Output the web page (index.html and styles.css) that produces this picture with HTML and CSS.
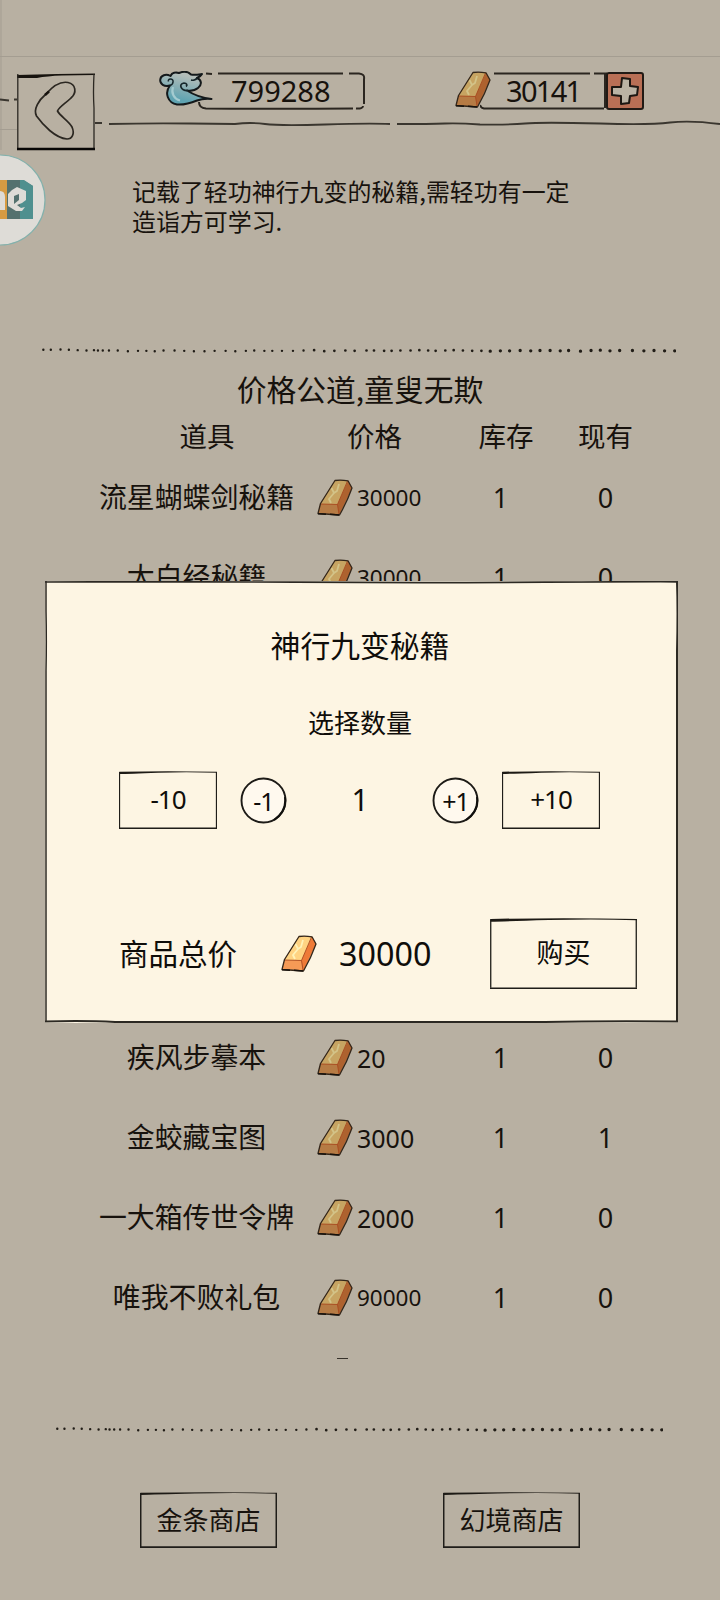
FILE: index.html
```html
<!DOCTYPE html>
<html lang="zh-CN">
<head>
<meta charset="utf-8">
<title>金条商店</title>
<link rel="stylesheet" href="styles.css">
</head>
<body>
<svg class="defs" width="0" height="0" aria-hidden="true">
  <symbol id="ingot" viewBox="0 0 36 37">
    <path d="M18 1 31 1.500 35 9 22.500 36 1 34.500 3.500 24.500Z" fill="var(--ingot-mid)"/>
    <path d="M18 1.500 31 2 20.500 25.500 3.500 25Z" fill="var(--ingot-top)"/>
    <path d="M14.500 9 17 14 12 20 14 24M22 5 20 12 17 14" stroke="var(--ingot-shine)" stroke-width="1.800" fill="none"/>
    <path d="M31 2 35 9 22 36 20.500 25.500Z" fill="var(--ingot-side)"/>
    <path d="M3.500 25 20.500 25.500 30.500 2M20.500 25.500 22 35" fill="none" stroke="#a8481f" stroke-width=".9"/>
    <path d="M18 1.500Q24 .8 31 1.800L35 9Q30 23 22.500 36L1 34.500 3.500 24.500Z" fill="none" stroke="#33261a" stroke-width="1.300" stroke-linejoin="round"/>
    <path d="M1 34.700 9 35.200M13 35.300 22 36" stroke="#17120d" stroke-width="1.500"/>
  </symbol>
  <symbol id="frame" viewBox="0 0 100 60" preserveAspectRatio="none">
    <path d="M.3 .8Q50 -.4 100 .8V1.800Q70 .6 40 1.700T.3 3.200Z"/>
    <path d="M.5 1V59" class="thin"/>
    <path d="M99.500 1V59" class="thin"/>
    <path d="M0 59.500H100" class="mid"/>
  </symbol>
  <symbol id="dots" viewBox="0 0 1440 20" preserveAspectRatio="none">
    <path stroke-width="2.400" class="dot" d="M3 8h.1M20 8h.1M42 7h.1M61 8h.1M81 9h.1M101 10h.1M118 9h.1M127 10h.1M138 10h.1M152 10h.1M172 10h.1M195 12h.1M218 11h.1M237 11h.1M256 12h.1M276 10h.1M301 10h.1M323 11h.1M345 12h.1M369 12h.1M392 11h.1M417 11h.1M439 12h.1M463 11h.1M482 10h.1M505 11h.1M523 11h.1M545 11h.1M570 11h.1M594 10h.1"/>
    <path stroke-width="2.700" class="dot" d="M618 9h.1M641 12h.1M664 11h.1M689 10h.1M710 11h.1M737 10h.1M754 10h.1M777 11h.1M794 11h.1M814 10h.1M837 10h.1M857 9h.1M877 10h.1M894 11h.1M916 10h.1M935 9h.1M956 10h.1M977 11h.1M998 11h.1"/>
    <path stroke-width="3.300" class="dot" d="M1018 12h.1M1041 11h.1M1062 11h.1M1086 10h.1M1110 11h.1M1131 10h.1M1154 10h.1M1177 11h.1M1196 10h.1M1223 12h.1M1247 10h.1M1268 9h.1M1290 11h.1M1312 10h.1M1341 10h.1M1367 11h.1M1390 10h.1M1414 11h.1M1437 11h.1"/>
  </symbol>
</svg>

<main class="screen">
  <header class="topbar">
    <svg class="rules" viewBox="0 0 720 150" fill="none">
      <path class="seam" d="M0 56.500H720M0 129.500H17M1 0V150"/>
      <path class="ink" d="M0 99.500 9 100.500M14 99.500H18M94 123H102"/>
      <path class="ink" d="M109 124Q150 123 190 123.500T235 124Q250 122 265 124T325 124.500 390 124"/>
      <path class="ink" d="M397 124Q430 124 445 123.500T480 124.500Q510 125 525 123.500T600 123.500Q650 125 670 122.500T720 124"/>
    </svg>
    <div class="back">
      <svg viewBox="0 0 78 78">
        <path d="M0 2Q20 1.500 40 1T78 .5V2Q60 2 45 2.500T20 5L0 5Z" fill="#17130e"/>
        <path d="M.8 1V77M77 1Q76 20 77 35V77" fill="none" stroke="#2c2822" stroke-width="1.300"/>
        <path d="M0 76H78" stroke="#080706" stroke-width="2.600"/>
        <path d="M29 21C35 14 43 8 51 9.500C59 11 60 20 54 25C49 30 42 34 40.500 38C43 43 52 48 55 54C58 61 55 66 50 66C38 65 26 52 19.500 43C16 36 22 27 29 21Z" fill="none" stroke="#2b2721" stroke-width="1.700"/>
        <path d="M28 22 32 18.500" stroke="#17130e" stroke-width="2.400"/>
      </svg>
    </div>
    <div class="purse purse-cloud">
      <svg class="purse-frame" viewBox="0 0 168 38" fill="none">
        <path class="pen" d="M8 1.500 14 2M20 1.500H145M151 1.500H161Q167 2 166 7V32M165 34Q165 37 158 36.500M155 36.500Q80 37 8 36.500Q1 36 1 30"/>
      </svg>
      <svg class="cloud" viewBox="0 0 54 36">
        <defs><linearGradient id="sky" x1=".7" y1="0" x2=".35" y2="1"><stop offset=".15" stop-color="#b4bdb9"/><stop offset=".85" stop-color="#5fa3b1"/></linearGradient></defs>
        <path d="M11 14.500C5 16 1 13 1.200 9C1.500 4 7 2.500 11.500 5C13 1.500 17 1 20 2C24 .3 29 .5 32 3.500C36 4 39 3.500 43 3C42 5 40 6 38 7C43 9 43 14 39 17C36 19.500 32 20 28 19.500C35 24 43 27 52.500 28C46 27.500 42 28 38 29.500C32 32 25 34 18 33.500C9 32 5 22 11 14.500Z" fill="url(#sky)" stroke="#14191b" stroke-width="2" stroke-linejoin="round"/>
        <path d="M11 14.500C15 13 15 8 11.500 8C9.500 8 9 9.500 9.500 10.500" fill="none" stroke="#16262b" stroke-width="1.500"/>
        <path d="M29 19.500C22 20 19 13 25 12C28 12 28.500 14.500 27 15.500M38 7C37 9 34 9.500 32 9" fill="none" stroke="#16262b" stroke-width="1.700"/>
        <path d="M14 16C12 22 15 28 21 29.500" fill="none" stroke="#a4cbd0" stroke-width="2.200"/>
      </svg>
      <span class="amount">799288</span>
    </div>
    <div class="purse purse-gold">
      <svg class="purse-frame" viewBox="0 0 128 38" fill="none">
        <path class="pen" d="M14 1.500H110M114 1.500H127M125 2V36M124 36.500H4Q1 36 0 33"/>
      </svg>
      <svg class="ingot dim"><use href="#ingot"/></svg>
      <span class="amount">30141</span>
      <svg class="plus" viewBox="0 0 38 38">
        <rect x="1" y="1" width="36" height="36" rx="2" fill="#b96f55" stroke="#211a15" stroke-width="2"/>
        <path d="M16 6 24 7V14L32 15 31 23 24 24 23 31 15 32V24L6 23V15L15 15Z" fill="#bbb3a4" stroke="#1d1712" stroke-width="2" stroke-linejoin="round"/>
      </svg>
    </div>
  </header>

  <svg class="floater" viewBox="0 0 46 92">
    <circle cx="0" cy="46" r="45" fill="#dedcd7" stroke="#83b1ac" stroke-width="1.200"/>
    <path d="M0 26H7V65H0Z" fill="#d69b43"/>
    <path d="M7 26H23L33 32V65H7Z" fill="#54716e"/>
    <path d="M20 26H24L33 32V65H20Z" fill="#4f908f"/>
    <path d="M0 37Q5 37 5 43V56H0" fill="#dedcd7"/>
    <path d="M12 36 17 33 26 37V46L22 49 17 51 21 54 25 53 22 57 16 57 8 52V40Z" fill="#dedcd7"/>
    <path d="M14 42 19 40V46L14 50Z" fill="#54716e"/>
  </svg>

  <p class="desc">记载了轻功神行九变的秘籍,需轻功有一定<br>造诣方可学习.</p>

  <svg class="dotline dotline-top"><use href="#dots"/></svg>

  <h1 class="slogan">价格公道,童叟无欺</h1>

  <div class="row head"><span class="name">道具</span><span class="price">价格</span><span class="stock">库存</span><span class="own">现有</span></div>

  <section class="list">
    <div class="row"><span class="name">流星蝴蝶剑秘籍</span><span class="price"><svg class="ingot dim"><use href="#ingot"/></svg><b class="small">30000</b></span><span class="stock num">1</span><span class="own num">0</span></div>
    <div class="row"><span class="name">太白经秘籍</span><span class="price"><svg class="ingot dim"><use href="#ingot"/></svg><b class="small">30000</b></span><span class="stock num">1</span><span class="own num">0</span></div>
    <div class="row after-dialog"><span class="name">疾风步摹本</span><span class="price"><svg class="ingot dim"><use href="#ingot"/></svg><b>20</b></span><span class="stock num">1</span><span class="own num">0</span></div>
    <div class="row"><span class="name">金蛟藏宝图</span><span class="price"><svg class="ingot dim"><use href="#ingot"/></svg><b>3000</b></span><span class="stock num">1</span><span class="own num">1</span></div>
    <div class="row"><span class="name">一大箱传世令牌</span><span class="price"><svg class="ingot dim"><use href="#ingot"/></svg><b>2000</b></span><span class="stock num">1</span><span class="own num">0</span></div>
    <div class="row"><span class="name">唯我不败礼包</span><span class="price"><svg class="ingot dim"><use href="#ingot"/></svg><b class="small">90000</b></span><span class="stock num">1</span><span class="own num">0</span></div>
  </section>
  <div class="peek"></div>

  <svg class="dotline dotline-bottom"><use href="#dots"/></svg>

  <nav class="shops">
    <div class="btn shop"><svg class="frame heavy"><use href="#frame"/></svg><span>金条商店</span></div>
    <div class="btn shop"><svg class="frame heavy"><use href="#frame"/></svg><span>幻境商店</span></div>
  </nav>

  <section class="dialog">
    <svg class="dialog-edge" viewBox="0 0 633 442" preserveAspectRatio="none" fill="none">
      <path d="M0 1Q120 .5 250 1.200T500 1.200 633 .8" stroke-width="1.700"/>
      <path d="M1 0V30Q1.600 60 1 90V441" stroke-width="1.500"/>
      <path d="M632 1Q633 30 632 70V441" stroke-width="2"/>
      <path d="M0 440.500Q40 439.500 70 441H500Q550 440 633 440.500" stroke-width="2"/>
    </svg>
    <h2>神行九变秘籍</h2>
    <p class="pick">选择数量</p>
    <div class="stepper">
      <div class="btn step"><svg class="frame"><use href="#frame"/></svg><span>-10</span></div>
      <div class="round"><svg viewBox="0 0 47 47"><circle cx="23.500" cy="23.500" r="22" fill="#fff9ee" stroke="#1d1b17" stroke-width="1.900"/><path d="M45 20Q47 34 34 43" fill="none" stroke="#11100d" stroke-width="2"/></svg><span>-1</span></div>
      <span class="count">1</span>
      <div class="round"><svg viewBox="0 0 47 47"><circle cx="23.500" cy="23.500" r="22" fill="#fff9ee" stroke="#1d1b17" stroke-width="1.900"/><path d="M45 20Q47 34 34 43" fill="none" stroke="#11100d" stroke-width="2"/></svg><span>+1</span></div>
      <div class="btn step"><svg class="frame"><use href="#frame"/></svg><span>+10</span></div>
    </div>
    <div class="total">
      <span class="label">商品总价</span>
      <svg class="ingot"><use href="#ingot"/></svg>
      <span class="sum">30000</span>
      <div class="btn buy"><svg class="frame"><use href="#frame"/></svg><span>购买</span></div>
    </div>
  </section>
</main>
</body>
</html>
```

FILE: styles.css
```css
:root {
  --paper: #b8b0a2;
  --text: #17120d;
  --cjk: "Noto Sans CJK SC", sans-serif;
  --digits: "Noto Sans", "Noto Sans CJK SC", sans-serif;
  --ingot-top: #ffd382;
  --ingot-mid: #f59a56;
  --ingot-side: #ee7a38;
  --ingot-shine: #fff2b8;
}

* { box-sizing: border-box; }

body { margin: 0; background: var(--paper); }

h1, h2, p { margin: 0; font-weight: 400; }

b { font-weight: 400; }

svg { display: block; }

.defs { position: absolute; }

.screen {
  position: relative;
  display: flex;
  flex-direction: column;
  width: 720px;
  height: 1600px;
  overflow: hidden;
  background: var(--paper);
  color: var(--text);
  font-family: var(--cjk);
}

/* top bar */
.topbar {
  position: relative;
  display: flex;
  align-items: flex-start;
  flex: none;
  height: 150px;
  padding: 72px 0 0 17px;
}

.rules { position: absolute; inset: 0; width: 720px; height: 150px; }
.seam { stroke: #a49d91; stroke-width: 1; }
.ink { stroke: #3a362f; stroke-width: 1.8; }
.pen { stroke: #2b2620; stroke-width: 2; }

.back { position: relative; width: 78px; height: 78px; margin-top: 1px; background: var(--paper); }

.purse { position: relative; display: flex; align-items: center; height: 38px; }
.purse-cloud { width: 168px; margin-left: 103px; padding-left: 33px; }
.purse-gold { width: 165px; margin-left: 114px; padding-left: 26px; }
.purse-frame { position: absolute; left: 0; top: 0; height: 38px; }
.purse-cloud .purse-frame { width: 168px; }
.purse-gold .purse-frame { width: 128px; }
.cloud { position: absolute; left: -39px; top: -1px; width: 54px; height: 36px; }
.purse-gold .ingot { position: absolute; left: -25px; top: -1px; }
.plus { position: absolute; right: 1px; top: 0; width: 38px; height: 38px; }
.amount { font: 29px/38px var(--digits); }
.purse-gold .amount { letter-spacing: -1.7px; }

.ingot { flex: none; width: 36px; height: 37px; }
.dim {
  --ingot-top: #c7a462;
  --ingot-mid: #b67b44;
  --ingot-side: #ae622f;
  --ingot-shine: #d3c388;
}

/* floating assistant bubble */
.floater { position: absolute; left: 0; top: 154px; width: 46px; height: 92px; }

.desc { height: 60px; margin: 26px 0 0 132px; font-size: 23.950px; line-height: 30px; }

.dotline { flex: none; height: 7px; fill: none; }
.dot { stroke: #211d17; stroke-linecap: round; vector-effect: non-scaling-stroke; }
.dotline-top { width: 634px; margin: 111px 0 0 42px; }
.dotline-bottom { width: 607px; margin: 67px 0 0 56px; }

.slogan { margin-top: 14px; font-size: 29.800px; line-height: 40px; text-align: center; }

/* goods table */
.row {
  display: grid;
  grid-template-columns: 223px 141px 103px 107px;
  align-items: center;
  height: 80px;
  padding-left: 85px;
  font-size: 27.900px;
  line-height: 40px;
}

.row .name { position: relative; top: -1px; text-align: center; }
.row .price { display: flex; align-items: center; padding-left: 9px; }
.row .stock, .row .own { text-align: center; }
.row b { margin-left: 4px; padding-top: 2px; font: 25px/40px var(--digits); }
.row b.small { font-size: 22.500px; }
.row .num { padding-top: 2px; font: 27px/40px var(--digits); }

.head { height: 40px; margin-top: 7px; font-size: 27.500px; }
.head .name { top: 0; padding-left: 21px; }
.head .price { padding-left: 39px; }
.head .stock { padding-left: 11px; }

.list { margin-top: 2px; }
.after-dialog { margin-top: 400px; }

.peek { flex: none; width: 11px; height: 1px; margin: 21px 0 0 337px; background: #37322b; }

/* hand-drawn button frame */
.btn { position: relative; display: flex; align-items: center; justify-content: center; }
.btn span { position: relative; }
.frame { position: absolute; inset: 0; width: 100%; height: 100%; overflow: visible; fill: #1d1a15; }
.frame { --thin: 1.3px; --mid: 1.8px; }
.frame.heavy { --thin: 1.6px; --mid: 2.6px; }
.thin, .mid { fill: none; stroke: #1f1d19; vector-effect: non-scaling-stroke; }
.thin { stroke-width: var(--thin); }
.mid { stroke-width: var(--mid); }

.shops { display: flex; gap: 166px; margin: 59px 0 0 140px; }
.shop { width: 137px; height: 56px; font-size: 26px; line-height: 40px; }
.shop span { top: -1px; }

/* purchase dialog */
.dialog {
  position: absolute;
  left: 45px;
  top: 581px;
  width: 633px;
  height: 442px;
  padding-top: 43px;
  background: #fdf5e3;
  color: #0f0d0a;
  text-align: center;
}

.dialog-edge { position: absolute; left: 0; top: 0; width: 633px; height: 442px; stroke: #2c2923; }
.dialog h2 { margin-right: 3px; font-size: 29.800px; line-height: 40px; }
.pick { margin: 38px 3px 0 0; font-size: 26px; line-height: 40px; }

.stepper { display: flex; align-items: center; height: 58px; margin: 29px 0 0 74px; }
.step { width: 98px; height: 58px; font: 26px/40px var(--digits); letter-spacing: -1px; }
.step span { top: -1px; }
.round {
  position: relative;
  display: flex;
  align-items: center;
  justify-content: center;
  width: 47px;
  height: 47px;
  margin: 1px 0 0 23px;
  font: 25px/40px var(--digits);
  letter-spacing: -1px;
}
.round svg { position: absolute; inset: 0; width: 47px; height: 47px; }
.round span { position: relative; }
.count { width: 145px; padding-left: 1px; font: 30px/40px var(--digits); }
.count + .round { margin-left: 0; }
.stepper > .step:last-child { margin-left: 23px; }

.total { display: flex; align-items: center; height: 72px; margin: 88px 0 0 74px; }
.label { position: relative; top: -1px; font-size: 29.500px; line-height: 40px; }
.total .ingot { margin-left: 44px; }
.sum { margin-left: 22px; font: 32.300px/40px var(--digits); }
.buy { width: 147px; height: 71px; margin-left: auto; margin-right: 41px; font-size: 27px; line-height: 40px; }
.buy span { top: -1px; }
```
